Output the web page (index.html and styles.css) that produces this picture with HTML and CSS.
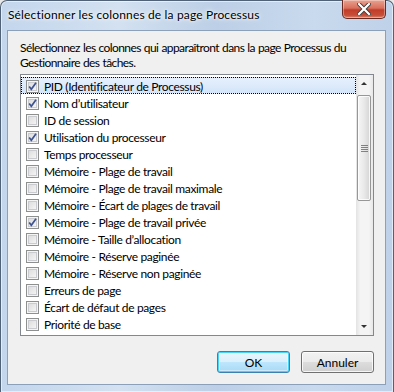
FILE: index.html
```html
<!DOCTYPE html>
<html lang="fr">

<head>
    <meta charset="UTF-8" />
    <meta name="viewport" content="width=device-width, initial-scale=1.0" />
    <title>Sélectionner les colonnes de la page Processus</title>
    <link rel="stylesheet" href="styles.css">
</head>

<body>
    <div class="window">
        <div class="titlebar">
            <span class="title">Sélectionner les colonnes de la page Processus</span>
            <button class="close" aria-label="Fermer">
                <svg width="14" height="12" viewBox="0 0 14 12">
                    <path d="M2 1 L12 11 M12 1 L2 11" stroke="#3b3b3b" stroke-width="4" stroke-linecap="square" />
                    <path d="M2 1 L12 11 M12 1 L2 11" stroke="#fff" stroke-width="2.2" stroke-linecap="square" />
                </svg>
            </button>
        </div>

        <div class="client">
            <p class="intro">Sélectionnez les colonnes qui apparaîtront dans la page Processus du<br>Gestionnaire des tâches.</p>

            <div class="listbox">
                <ul class="items">
                    <li class="item focus"><span class="box"><svg width="11" height="11" viewBox="0 0 11 11"><path d="M2.2 5.6 L4.3 8.3 L9 1.8" fill="none" stroke="#3d5291" stroke-width="1.7" /></svg></span>PID (Identificateur de Processus)</li>
                    <li class="item"><span class="box"><svg width="11" height="11" viewBox="0 0 11 11"><path d="M2.2 5.6 L4.3 8.3 L9 1.8" fill="none" stroke="#3d5291" stroke-width="1.7" /></svg></span>Nom d’utilisateur</li>
                    <li class="item"><span class="box"></span>ID de session</li>
                    <li class="item"><span class="box"><svg width="11" height="11" viewBox="0 0 11 11"><path d="M2.2 5.6 L4.3 8.3 L9 1.8" fill="none" stroke="#3d5291" stroke-width="1.7" /></svg></span>Utilisation du processeur</li>
                    <li class="item"><span class="box"></span>Temps processeur</li>
                    <li class="item"><span class="box"></span>Mémoire - Plage de travail</li>
                    <li class="item"><span class="box"></span>Mémoire - Plage de travail maximale</li>
                    <li class="item"><span class="box"></span>Mémoire - Écart de plages de travail</li>
                    <li class="item"><span class="box"><svg width="11" height="11" viewBox="0 0 11 11"><path d="M2.2 5.6 L4.3 8.3 L9 1.8" fill="none" stroke="#3d5291" stroke-width="1.7" /></svg></span>Mémoire - Plage de travail privée</li>
                    <li class="item"><span class="box"></span>Mémoire - Taille d’allocation</li>
                    <li class="item"><span class="box"></span>Mémoire - Réserve paginée</li>
                    <li class="item"><span class="box"></span>Mémoire - Réserve non paginée</li>
                    <li class="item"><span class="box"></span>Erreurs de page</li>
                    <li class="item"><span class="box"></span>Écart de défaut de pages</li>
                    <li class="item"><span class="box"></span>Priorité de base</li>
                </ul>

                <div class="scrollbar">
                    <div class="arrow up"></div>
                    <div class="track">
                        <div class="thumb"><span class="grip"></span></div>
                    </div>
                    <div class="arrow down"></div>
                </div>
            </div>

            <div class="actions">
                <button class="btn default">OK</button>
                <button class="btn">Annuler</button>
            </div>
        </div>
    </div>
</body>

</html>
```

FILE: styles.css
```css
* {
    margin: 0;
    padding: 0;
    box-sizing: border-box;
}

body {
    background: #e8e8e8;
    font-family: 'Segoe UI', Lato, 'Noto Sans', sans-serif;
    font-size: 12px;
    color: #000;
}

/* cadre vitré façon Aero */
.window {
    width: 394px;
    height: 392px;
    border: 1px solid #4f6277;
    border-bottom: 0;
    border-radius: 7px 7px 0 0;
    background: linear-gradient(90deg, #c3d6ec 0%, #d3e1f1 30%, #bccfe6 55%, #c9daee 80%, #bed1e8 100%);
    box-shadow: inset 0 0 0 1px rgba(255, 255, 255, .55);
    display: flex;
    flex-direction: column;
}

.titlebar {
    height: 29px;
    display: flex;
    align-items: flex-start;
    justify-content: space-between;
    padding-left: 7px;
}

.title {
    margin-top: 6px;
    font-size: 12px;
    line-height: 16px;
    letter-spacing: .15px;
    text-shadow: 0 0 6px #fff, 0 0 3px #fff;
}

.close {
    width: 44px;
    height: 19px;
    margin-top: -1px;
    margin-right: 7px;
    border: 1px solid #6a2a22;
    border-top: 0;
    border-radius: 0 0 5px 5px;
    background: linear-gradient(#eaa291 0%, #d8705c 45%, #c23d2a 55%, #c74e38 85%, #d98a6e 100%);
    box-shadow: inset 0 0 0 1px rgba(255, 255, 255, .35);
    display: flex;
    align-items: center;
    justify-content: center;
}

.client {
    flex: 1;
    margin: 0 7px 7px 6px;
    border: 1px solid #8ca1b9;
    background: #f0f0f0;
    padding: 9px 11px 0 12px;
    display: flex;
    flex-direction: column;
}

.intro {
    line-height: 15px;
    letter-spacing: -.58px;
    word-spacing: .5px;
    white-space: nowrap;
}

.listbox {
    margin-top: 4px;
    height: 262px;
    border: 1px solid #828790;
    background: #fff;
    display: flex;
    overflow: hidden;
}

.items {
    flex: 1;
    list-style: none;
    padding-top: 2px;
    overflow: hidden;
}

.item {
    height: 17px;
    display: flex;
    align-items: center;
    padding-left: 4px;
    padding-top: 1px;
    letter-spacing: -.35px;
    white-space: nowrap;
    border: 1px solid transparent;
}

.item.focus {
    background: linear-gradient(#e6f0fd, #d3e5fa);
    border: 1px dotted #000;
}

.box {
    width: 13px;
    height: 13px;
    margin-right: 5px;
    border: 1px solid #8e8f8f;
    background: linear-gradient(135deg, #d7d7d7, #fbfbfb);
    box-shadow: inset 0 0 0 1px #f5f5f5, inset 0 0 0 2px #c9cbcf;
    display: flex;
    align-items: center;
    justify-content: center;
    flex-shrink: 0;
}

.scrollbar {
    width: 17px;
    display: flex;
    flex-direction: column;
    background: linear-gradient(90deg, #e3e3e3, #f4f4f4 25%, #f4f4f4 75%, #e8e8e8);
}

.arrow {
    height: 17px;
    position: relative;
}

.arrow::after {
    content: "";
    position: absolute;
    left: 5px;
    top: 7px;
    border-left: 3px solid transparent;
    border-right: 3px solid transparent;
}

.arrow.up::after {
    border-bottom: 3px solid #333;
}

.arrow.down::after {
    border-top: 3px solid #333;
}

.track {
    flex: 1;
    padding: 3px 0 0 1px;
}

.thumb {
    width: 14px;
    height: 106px;
    border: 1px solid #979797;
    border-radius: 2px;
    background: linear-gradient(90deg, #f6f6f6, #e9e9e9 50%, #d4d4d4);
    box-shadow: inset 0 0 0 1px rgba(255, 255, 255, .8);
    display: flex;
    align-items: center;
    justify-content: center;
}

.grip {
    width: 7px;
    height: 7px;
    background: repeating-linear-gradient(#555 0 1px, transparent 1px 2px);
    opacity: .7;
}

.actions {
    display: flex;
    justify-content: flex-end;
    gap: 11px;
    margin-top: 15px;
}

.btn {
    width: 73px;
    height: 22px;
    font-family: inherit;
    font-size: 12px;
    color: #000;
    border: 1px solid #707070;
    border-radius: 3px;
    background: linear-gradient(#f2f2f2 0%, #ebebeb 50%, #dddddd 51%, #cfcfcf 100%);
    box-shadow: inset 0 0 0 1px rgba(255, 255, 255, .8);
}

.btn.default {
    border-color: #3c7fb1;
    background: linear-gradient(#eaf6fd 0%, #d9f0fc 50%, #bee6fd 51%, #a7d9f5 100%);
    box-shadow: inset 0 0 0 1px #48d4f6, inset 0 0 0 2px rgba(255, 255, 255, .4);
}
```
